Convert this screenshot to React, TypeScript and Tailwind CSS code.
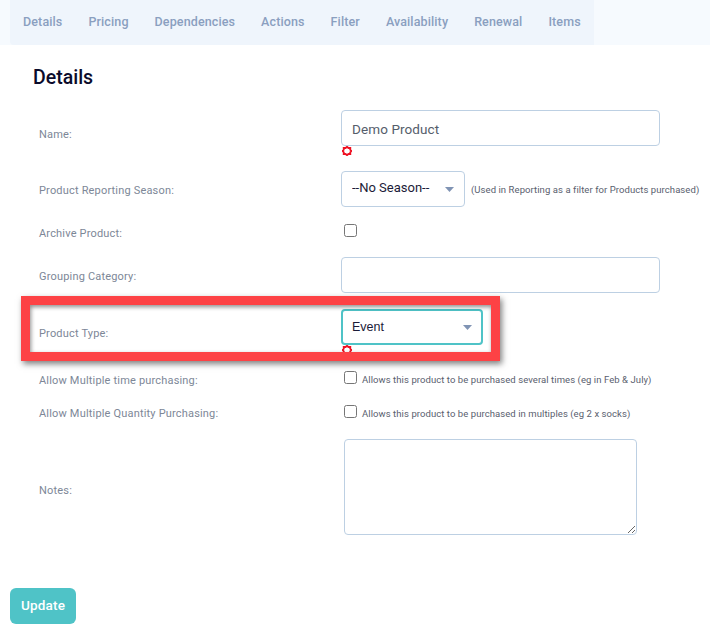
import type { ReactNode } from "react";

const tabs = [
  "Details",
  "Pricing",
  "Dependencies",
  "Actions",
  "Filter",
  "Availability",
  "Renewal",
  "Items",
];

function Star() {
  return (
    <svg width="10" height="10" viewBox="0 0 10 10" className="block">
      <path
        d="M5 .8 6.4 2 8.3 1.9 8.2 3.7 9.4 5 8.2 6.3 8.3 8.1 6.4 8 5 9.2 3.6 8 1.7 8.1 1.8 6.3.6 5 1.8 3.7 1.7 1.9 3.6 2Z"
        fill="#ffffff"
        stroke="#ee1122"
        strokeWidth="1.8"
      />
    </svg>
  );
}

function Row({
  label,
  labelClass,
  className,
  children,
}: {
  label: string;
  labelClass: string;
  className: string;
  children: ReactNode;
}) {
  return (
    <div className={`flex ${className}`}>
      <div
        className={`w-[302px] shrink-0 text-[11px] leading-4 tracking-[0.18px] text-[#7d8797] ${labelClass}`}
      >
        {label}
      </div>
      <div className="min-w-0 flex-1">{children}</div>
    </div>
  );
}

function Caret() {
  return (
    <svg
      width="9"
      height="5"
      viewBox="0 0 9 5"
      className="pointer-events-none absolute right-[11px] top-[16px]"
    >
      <path d="M0 0h9L4.5 5Z" fill="#8094b4" />
    </svg>
  );
}

function Hint({ children, className }: { children: ReactNode; className: string }) {
  return (
    <span className={`text-[9.5px] leading-3 tracking-[0.07px] text-[#59606e] ${className}`}>
      {children}
    </span>
  );
}

export default function App() {
  return (
    <div className="relative h-[640px] w-[710px] overflow-hidden bg-white font-['Roboto',sans-serif]">
      <div className="flex h-[45px] bg-[#f6fafe] pl-[10px]">
        <div className="flex h-[45px] w-[584px] items-center gap-[26px] rounded-bl bg-[#eff5fc] pb-[1px] pl-[13px] text-[12.5px] font-medium tracking-[0.12px] text-[#8a9fc0]">
          {tabs.map((tab) => (
            <span key={tab}>{tab}</span>
          ))}
        </div>
      </div>

      <h2 className="ml-[33px] mt-[21px] h-[24px] text-[19.5px] font-medium leading-6 text-[#0b0b2b]">
        Details
      </h2>

      <div className="pl-[39px]">
        <Row label="Name:" labelClass="pt-[17px]" className="mt-[20px] h-[61px]">
          <input
            readOnly
            value="Demo Product"
            className="block h-[36px] w-[319px] rounded border border-[#bdd0e3] px-[10px] pt-[2px] text-[13.5px] tracking-[0.1px] text-[#555d6b] outline-none"
          />
          <div className="ml-[1px]">
            <Star />
          </div>
        </Row>

        <Row label="Product Reporting Season:" labelClass="pt-[12px]" className="h-[53px]">
          <div className="flex items-center">
            <div className="relative h-[36px] w-[124px] shrink-0">
              <select className="block h-[36px] w-full appearance-none rounded border border-[#bdd0e3] bg-white pb-[2px] pl-[10px] text-[13px] text-[#1b1b38] outline-none">
                <option>--No Season--</option>
              </select>
              <Caret />
            </div>
            <Hint className="ml-[6px] whitespace-nowrap pt-[1px]">
              (Used in Reporting as a filter for Products purchased)
            </Hint>
          </div>
        </Row>

        <Row label="Archive Product:" labelClass="pt-[2px]" className="h-[33px]">
          <input type="checkbox" readOnly className="ml-[3px] mt-0 block" />
        </Row>

        <Row label="Grouping Category:" labelClass="pt-[12px]" className="h-[52px]">
          <input
            readOnly
            className="block h-[36px] w-[319px] rounded border border-[#bdd0e3] outline-none"
          />
        </Row>

        <Row label="Product Type:" labelClass="pt-[17px]" className="h-[62px]">
          <div className="relative h-[36px] w-[142px]">
            <select className="block h-[36px] w-full appearance-none rounded border-2 border-[#4fc3c7] bg-white pl-[9px] font-['Liberation_Sans',sans-serif] text-[12.5px] text-[#1b1b38] outline-none">
              <option>Event</option>
            </select>
            <Caret />
          </div>
          <div className="ml-[1px]">
            <Star />
          </div>
        </Row>

        <Row label="Allow Multiple time purchasing:" labelClass="pt-[2px]" className="h-[34px]">
          <div className="flex items-start">
            <input type="checkbox" readOnly className="ml-[3px] mt-0 block" />
            <Hint className="ml-[5px] pt-[3px]">
              Allows this product to be purchased several times (eg in Feb &amp; July)
            </Hint>
          </div>
        </Row>

        <Row label="Allow Multiple Quantity Purchasing:" labelClass="pt-[1px]" className="h-[34px]">
          <div className="flex items-start">
            <input type="checkbox" readOnly className="ml-[3px] mt-0 block" />
            <Hint className="ml-[5px] pt-[3px]">
              Allows this product to be purchased in multiples (eg 2 x socks)
            </Hint>
          </div>
        </Row>

        <Row label="Notes:" labelClass="pt-[44px]" className="h-[149px]">
          <textarea
            readOnly
            className="ml-[3px] block h-[96px] w-[293px] rounded border border-[#bdd0e3] outline-none"
          />
        </Row>
      </div>

      <button className="ml-[10px] block h-[36px] w-[66px] rounded-md bg-[#4fc3c7] pb-[2px] text-[13.5px] font-medium tracking-[0.2px] text-white">
        Update
      </button>

      {/* red annotation drawn over the Product Type row */}
      <div className="pointer-events-none absolute left-[21px] top-[296px] h-[65px] w-[479px] border-[9px] border-[#fd4245] shadow-[2px_3px_6px_rgba(0,0,0,0.5),inset_1px_2px_4px_rgba(0,0,0,0.45)]" />
    </div>
  );
}
